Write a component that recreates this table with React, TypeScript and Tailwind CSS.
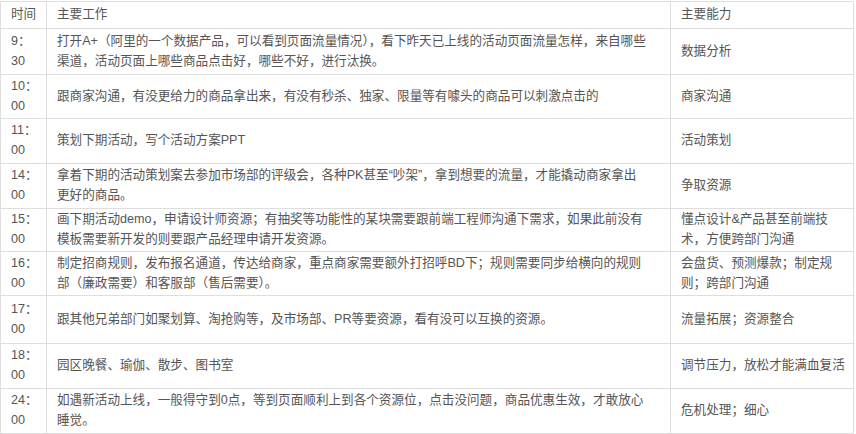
const rows = [
  {
    h: "h-[46px]",
    time: ["9：", "30"],
    work: [
      "打开A+（阿里的一个数据产品，可以看到页面流量情况），看下昨天已上线的活动页面流量怎样，来自哪些",
      "渠道，活动页面上哪些商品点击好，哪些不好，进行汰换。",
    ],
    skill: ["数据分析"],
  },
  {
    h: "h-[44px]",
    time: ["10：", "00"],
    work: ["跟商家沟通，有没更给力的商品拿出来，有没有秒杀、独家、限量等有噱头的商品可以刺激点击的"],
    skill: ["商家沟通"],
  },
  {
    h: "h-[45px]",
    time: ["11：", "00"],
    work: ["策划下期活动，写个活动方案PPT"],
    skill: ["活动策划"],
  },
  {
    h: "h-[45px]",
    time: ["14：", "00"],
    work: [
      "拿着下期的活动策划案去参加市场部的评级会，各种PK甚至“吵架”，拿到想要的流量，才能撬动商家拿出",
      "更好的商品。",
    ],
    skill: ["争取资源"],
  },
  {
    h: "h-[43px]",
    time: ["15：", "00"],
    work: [
      "画下期活动demo，申请设计师资源；有抽奖等功能性的某块需要跟前端工程师沟通下需求，如果此前没有",
      "模板需要新开发的则要跟产品经理申请开发资源。",
    ],
    skill: ["懂点设计&产品甚至前端技", "术，方便跨部门沟通"],
  },
  {
    h: "h-[44px]",
    time: ["16：", "00"],
    work: [
      "制定招商规则，发布报名通道，传达给商家，重点商家需要额外打招呼BD下；规则需要同步给横向的规则",
      "部（廉政需要）和客服部（售后需要）。",
    ],
    skill: ["会盘货、预测爆款；制定规", "则；跨部门沟通"],
  },
  {
    h: "h-[48px]",
    time: ["17：", "00"],
    work: ["跟其他兄弟部门如聚划算、淘抢购等，及市场部、PR等要资源，看有没可以互换的资源。"],
    skill: ["流量拓展；资源整合"],
  },
  {
    h: "h-[45px]",
    time: ["18：", "00"],
    work: ["园区晚餐、瑜伽、散步、图书室"],
    skill: ["调节压力，放松才能满血复活"],
  },
  {
    h: "h-[45px]",
    time: ["24：", "00"],
    work: [
      "如遇新活动上线，一般得守到0点，等到页面顺利上到各个资源位，点击没问题，商品优惠生效，才敢放心",
      "睡觉。",
    ],
    skill: ["危机处理；细心"],
  },
];

function Lines({ lines }: { lines: string[] }) {
  return (
    <>
      {lines.map((line, i) => (
        <div key={i} className="whitespace-nowrap">
          {line}
        </div>
      ))}
    </>
  );
}

export default function App() {
  return (
    <div
      className="w-[856px] h-[434px] overflow-hidden bg-white pt-px text-[#555] text-[12.6px] leading-[19.8px]"
      style={{ fontFamily: '"Liberation Sans", "Noto Sans CJK SC", sans-serif' }}
    >
      <table className="w-[853px] border-collapse table-fixed">
        <colgroup>
          <col className="w-[46px]" />
          <col className="w-[624px]" />
          <col className="w-[183px]" />
        </colgroup>
        <thead>
          <tr className="h-[27px]">
            <th className="border border-[#dedede] pl-[10px] pr-0 text-left font-normal align-middle whitespace-nowrap">
              时间
            </th>
            <th className="border border-[#dedede] px-[10px] text-left font-normal align-middle whitespace-nowrap">
              主要工作
            </th>
            <th className="border border-[#dedede] px-[10px] text-left font-normal align-middle whitespace-nowrap">
              主要能力
            </th>
          </tr>
        </thead>
        <tbody>
          {rows.map((row, i) => (
            <tr key={i} className={row.h}>
              <td className="border border-[#dedede] pl-[10px] pr-0 align-middle">
                <Lines lines={row.time} />
              </td>
              <td className="border border-[#dedede] px-[10px] align-middle">
                <Lines lines={row.work} />
              </td>
              <td className="border border-[#dedede] px-[10px] align-middle">
                <Lines lines={row.skill} />
              </td>
            </tr>
          ))}
        </tbody>
      </table>
    </div>
  );
}
